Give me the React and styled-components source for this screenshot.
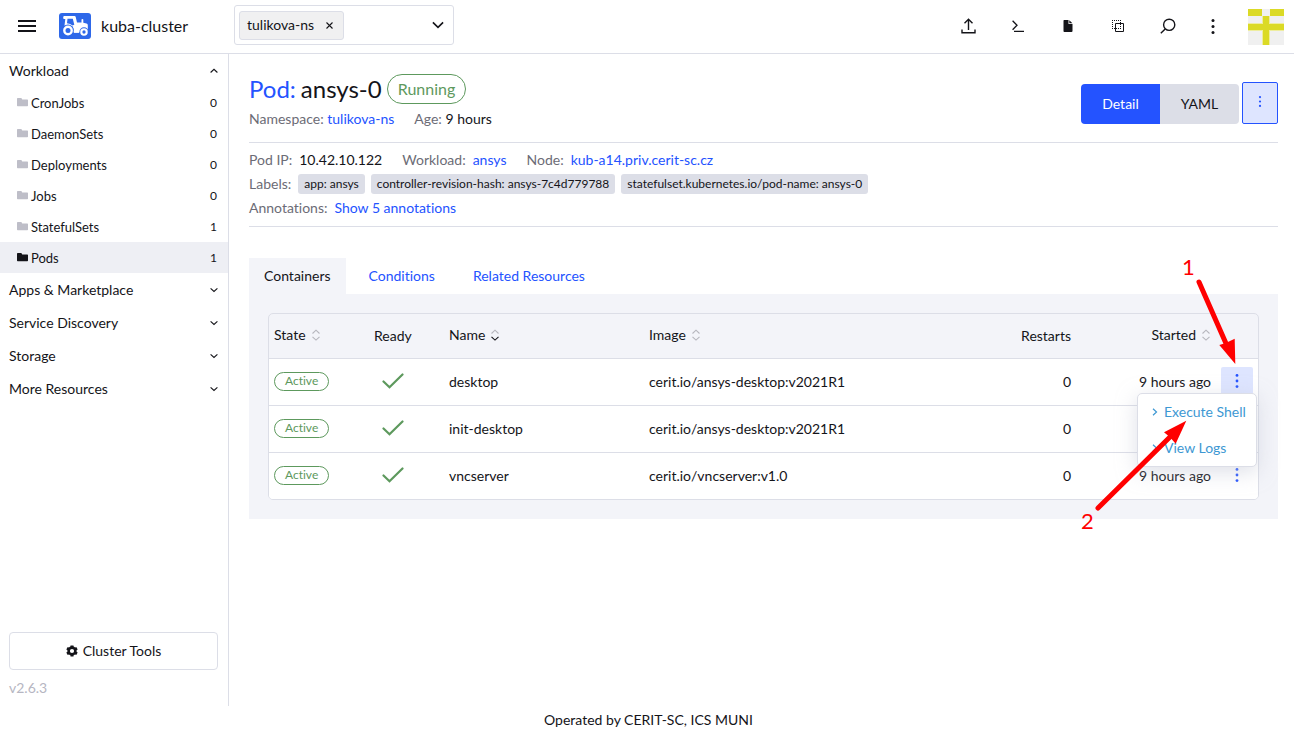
import React from "react";
import styled, { createGlobalStyle, css } from "styled-components";

const GlobalStyle = createGlobalStyle`
  * {
    box-sizing: border-box;
  }

  body {
    margin: 0;
    background: #fff;
    color: #141419;
    font-family: Lato, "Liberation Sans", sans-serif;
    font-size: 14px;
    font-variant-ligatures: none;
    line-height: 20px;
  }

  button {
    margin: 0;
    padding: 0;
    border: 0;
    background: none;
    color: inherit;
    font: inherit;
    font-variant-ligatures: none;
    cursor: pointer;
  }

  a {
    color: #2453ff;
    text-decoration: none;
  }

  svg {
    display: block;
    flex: none;
  }
`;

const Page = styled.div`
  display: flex;
  flex-direction: column;
  min-height: 100vh;
`;

const Header = styled.header`
  display: flex;
  align-items: center;
  height: 54px;
  padding: 0 10px 1px 18px;
  border-bottom: 1px solid #dcdee7;
`;

const MenuButton = styled.button`
  margin-right: 23px;
`;

const ClusterName = styled.div`
  width: 143px;
  padding-left: 10px;
  font-size: 16px;
`;

const NamespaceFilter = styled.div`
  display: flex;
  align-items: center;
  justify-content: space-between;
  width: 220px;
  height: 40px;
  margin-bottom: 2px;
  padding: 0 9px 0 4px;
  border: 1px solid #dcdee7;
  border-radius: 3px;
`;

const NamespaceTag = styled.span`
  display: flex;
  align-items: center;
  gap: 12px;
  height: 29px;
  padding: 0 10px 0 7px;
  border: 1px solid #dcdee7;
  border-radius: 3px;
  background: #f0f0f1;
`;

const HeaderTools = styled.div`
  display: flex;
  align-items: center;
  margin-left: auto;
`;

const ToolButton = styled.button`
  display: flex;
  align-items: center;
  justify-content: center;
  width: ${({ $narrow }) => ($narrow ? "40px" : "50px")};
  height: 40px;
`;

const AvatarButton = styled.button`
  margin: 2px 0 0 15px;
`;

const Body = styled.div`
  display: flex;
  flex: 1;
`;

const Sidebar = styled.nav`
  display: flex;
  flex-direction: column;
  width: 229px;
  flex: none;
  border-right: 1px solid #dcdee7;
`;

const GroupHeader = styled.button`
  display: flex;
  align-items: center;
  justify-content: space-between;
  width: 100%;
  height: 33px;
  padding: 0 10px 0 9px;
`;

const NavItem = styled.a`
  display: flex;
  align-items: center;
  gap: 3px;
  height: 31px;
  padding: 0 11px 0 17px;
  background: ${({ $active }) => ($active ? "#eeeff4" : "transparent")};
  color: #141419;

  svg {
    color: ${({ $active }) => ($active ? "#141419" : "#bebec8")};
  }
`;

const NavLabel = styled.span`
  flex: 1;
  font-size: 13px;
`;

const NavCount = styled.span`
  font-size: 12px;
`;

const SidebarFooter = styled.div`
  margin-top: auto;
  padding: 0 10px 8px 9px;
`;

const ClusterTools = styled.button`
  display: flex;
  align-items: center;
  justify-content: center;
  gap: 5px;
  width: 100%;
  height: 38px;
  border: 1px solid #dcdee7;
  border-radius: 4px;
`;

const Version = styled.div`
  margin-top: 8px;
  color: #b6b6c2;
`;

const Main = styled.main`
  flex: 1;
  min-width: 0;
  padding: 20px 16px 20px 20px;
`;

const Masthead = styled.div`
  display: flex;
  justify-content: space-between;
  padding-bottom: 13px;
  border-bottom: 1px solid #dcdee7;
`;

const Title = styled.h1`
  display: flex;
  align-items: center;
  gap: 5px;
  margin: 0 0 5px;
  font-size: 24px;
  font-weight: 400;
  line-height: 28px;
`;

const badge = css`
  display: inline-flex;
  align-items: center;
  border: 1px solid #5d995d;
  color: #5d995d;
`;

const PodBadge = styled.span`
  ${badge}
  height: 30px;
  padding: 0 10px;
  border-radius: 15px;
  font-size: 16px;
`;

const StateBadge = styled.span`
  ${badge}
  height: 19px;
  margin-bottom: 2px;
  padding: 0 10px;
  border-radius: 10px;
  font-size: 12px;
  vertical-align: middle;
`;

const InfoRow = styled.div`
  display: flex;
  gap: 20px;
`;

const Muted = styled.span`
  color: #6c6c76;
`;

const MastheadActions = styled.div`
  display: flex;
  align-items: flex-end;
  align-self: flex-start;
  gap: 3px;
  margin-top: 8px;
`;

const ViewSwitch = styled.div`
  display: flex;
  border-radius: 4px;
  overflow: hidden;
`;

const ViewButton = styled.button`
  width: 79px;
  height: 40px;
  background: ${({ $active }) => ($active ? "#2453ff" : "#dcdee7")};
  color: ${({ $active }) => ($active ? "#fff" : "#141419")};
`;

const MoreButton = styled.button`
  display: flex;
  justify-content: center;
  align-items: center;
  width: 36px;
  height: 42px;
  padding-bottom: 3px;
  border: 1px solid #2453ff;
  border-radius: 2px;
  background: #dee5ff;
  color: #2453ff;
`;

const Details = styled.section`
  padding: 5px 0 6px;
  border-bottom: 1px solid #dcdee7;
`;

const DetailRow = styled.div`
  display: flex;
  align-items: center;
  gap: 20px;
  height: 24px;
`;

const DetailItem = styled.div`
  display: flex;
  align-items: center;
  gap: 7px;
`;

const LabelList = styled.div`
  display: flex;
  gap: 6px;
`;

const Label = styled.span`
  height: 20px;
  padding: 0 6px;
  border-radius: 3px;
  background: #dcdee7;
  font-size: 12px;
`;

const TabList = styled.div`
  display: flex;
  gap: 8px;
  margin-top: 31px;
`;

const Tab = styled.button`
  height: 36px;
  padding: 0 15px;
  background: ${({ $active }) => ($active ? "#f3f4f9" : "transparent")};
  color: ${({ $active }) => ($active ? "#141419" : "#2453ff")};
`;

const TabPanel = styled.section`
  padding: 19px;
  background: #f3f4f9;
`;

const Table = styled.table`
  width: 100%;
  border: 1px solid #dcdee7;
  border-radius: 5px;
  border-spacing: 0;
  table-layout: fixed;

  th {
    height: 45px;
    padding: 0 5px;
    border-bottom: 1px solid #dcdee7;
    font-weight: 400;
    text-align: left;
  }

  td {
    height: 47px;
    padding: 0 5px;
    border-bottom: 1px solid #dcdee7;
    background: #fff;
  }

  tbody tr:last-child td {
    height: 46px;
    border-bottom: 0;
  }

  tbody tr:last-child td:first-child {
    border-bottom-left-radius: 4px;
  }

  tbody tr:last-child td:last-child {
    border-bottom-right-radius: 4px;
  }

  .right {
    text-align: right;
  }
`;

const Col = styled.col`
  width: ${({ $width }) => $width || "auto"};
`;

const SortButton = styled.button`
  display: inline-flex;
  align-items: center;
  gap: 5px;
  margin-bottom: 2px;
  vertical-align: middle;
`;

const CheckMark = styled.svg`
  margin: 0 0 2px 8px;
`;

const RowActions = styled.div`
  position: relative;
  width: 32px;
`;

const RowButton = styled.button`
  display: flex;
  align-items: center;
  justify-content: center;
  width: 32px;
  height: 30px;
  padding-bottom: 2px;
  border-radius: 2px;
  background: ${({ $open }) => ($open ? "#dee5ff" : "transparent")};
  color: #2453ff;
`;

const Menu = styled.div`
  position: absolute;
  z-index: 1;
  top: 26px;
  right: -4px;
  width: 120px;
  border: 1px solid #dcdee7;
  border-radius: 5px;
  background: #fff;
  box-shadow: 0 5px 20px rgba(190, 193, 210, 0.5);
`;

const MenuItem = styled.button`
  display: flex;
  align-items: center;
  gap: 6px;
  width: 100%;
  height: 36px;
  padding-left: 14px;
  color: #3d98d3;
  white-space: nowrap;
`;

// drawn over the first row's menu, so it moves along with it
const Steps = styled.svg`
  position: absolute;
  z-index: 2;
  top: -130px;
  left: -144px;
  pointer-events: none;
  font-family: Lato, "Liberation Sans", sans-serif;
  font-size: 22px;
`;

const Footer = styled.footer`
  height: 26px;
  padding: 4px 0 2px 3px;
  text-align: center;
`;

const Dots = ({ size = 14, r = 1.4 }) => (
  <svg width="4" height={size} viewBox={`0 0 4 ${size}`} fill="currentColor">
    <circle cx="2" cy={r} r={r} />
    <circle cx="2" cy={size / 2} r={r} />
    <circle cx="2" cy={size - r} r={r} />
  </svg>
);

const Chevron = ({ up, width = 8, stroke = 1.1 }) => (
  <svg
    width={width}
    height={width}
    viewBox="0 0 8 8"
    fill="none"
    stroke="currentColor"
    strokeWidth={stroke}
  >
    <path d={up ? "M.6 5.5 4 2.3l3.4 3.2" : "M.6 2.3 4 5.5l3.4-3.2"} />
  </svg>
);

const Folder = () => (
  <svg width="11" height="9" viewBox="0 0 11 9" fill="currentColor">
    <path d="M0 .7Q0 0 .7 0h3.3q.5 0 .8.5l.4.9h5.1q.7 0 .7.7v5.400q0 .7-.7.7H.7Q0 8.200 0 7.500z" />
  </svg>
);

const Gear = () => (
  <svg width="12" height="12" viewBox="0 0 12 12" fill="none" stroke="currentColor">
    <circle cx="6" cy="6" r="3.400" strokeWidth="2.600" />
    <path
      strokeWidth="3"
      d="M6 .5v2M6 9.500v2M1 3.200l2 1.100M9 7.700l2 1.100M1 8.800l2-1.100M9 4.300l2-1.100"
    />
  </svg>
);

const Logo = () => (
  <svg width="32" height="26" viewBox="0 0 32 26">
    <rect width="32" height="26" rx="3" fill="#2e68e9" />
    <path
      fill="#fff"
      d="M5 3h10.500q1 0 1.200 1l1.300 5.500h4.500V6.800q0-.9.900-.9t.9.900v2.900l3.200.8q1.300.4 1.300 1.700V19H14.500L5.500 12.500 6.300 6H5q-.8 0-.8-1.500T5 3z"
    />
    <path fill="#2e68e9" d="M8.500 5.800h5.300l1.500 6-1.800.8q-2-1.900-5.500-2.300z" />
    <circle cx="9" cy="17.500" r="6" fill="#2e68e9" />
    <circle cx="9" cy="17.500" r="3.700" fill="none" stroke="#fff" strokeWidth="2.400" />
    <circle cx="25" cy="19" r="4.700" fill="#2e68e9" />
    <circle cx="25" cy="19" r="2.700" fill="none" stroke="#fff" strokeWidth="2.100" />
    <path stroke="#fff" strokeWidth="2.800" d="M14.800 18.500h5.400" />
  </svg>
);

const Avatar = () => (
  <svg width="36" height="36" viewBox="0 0 36 36">
    <path fill="#f0f0f0" d="M0 0h36v36H0z" />
    <path fill="#eeeda0" d="M0 14h36v8H0zM14 7h8v29h-8z" />
    <path fill="#dbda26" d="M0 0h14v7H0zM22 0h14v7H22zM0 15h36v6H0zM15 7h6v29h-6z" />
  </svg>
);

const SortIcon = ({ active }) => (
  <svg width="10" height="12" viewBox="0 0 10 12" fill="none" strokeWidth="1.100">
    <path stroke="#b6b6bd" d="M1.500 4.500 5 1.200l3.500 3.300" />
    <path stroke={active ? "#141419" : "#b6b6bd"} d="M1.500 7.800 5 11.100l3.500-3.300" />
  </svg>
);

const UploadIcon = () => (
  <svg width="15" height="16" viewBox="0 0 15 16" fill="none" stroke="currentColor" strokeWidth="1.400">
    <path d="M7.500 12V1.200M3.500 5.200l4-4 4 4M1 11.500v3.300h13v-3.300" />
  </svg>
);

const ShellIcon = () => (
  <svg width="12" height="12" viewBox="0 0 12 12" fill="none" stroke="currentColor" strokeWidth="1.300">
    <path d="M.6.800 5 5.300.6 9.800M2 11.300h10" />
  </svg>
);

const FileIcon = () => (
  <svg width="10" height="12" viewBox="0 0 10 12" fill="currentColor">
    <path d="M1 0h4.500v4H9.500v7q0 1-1 1H1.300q-.8 0-.8-1V1Q.5 0 1 0zM6.300.2 9.400 3.300H6.300z" />
  </svg>
);

const CopyIcon = () => (
  <svg width="12" height="12" viewBox="0 0 12 12" fill="none" stroke="currentColor">
    <path strokeDasharray="1 1" d="M0 .5h9M.5 0v9M8.500 0v9M0 8.500h9" />
    <path d="M3.500 3.500h8v8h-8z" />
  </svg>
);

const SearchIcon = () => (
  <svg width="16" height="16" viewBox="0 0 16 16" fill="none" stroke="currentColor" strokeWidth="1.400">
    <circle cx="9.200" cy="6.800" r="5.600" />
    <path d="M5.200 10.900.8 15.300" />
  </svg>
);

const workloads = [
  { name: "CronJobs", count: 0 },
  { name: "DaemonSets", count: 0 },
  { name: "Deployments", count: 0 },
  { name: "Jobs", count: 0 },
  { name: "StatefulSets", count: 1 },
  { name: "Pods", count: 1, active: true },
];

const groups = ["Apps & Marketplace", "Service Discovery", "Storage", "More Resources"];

const labels = [
  "app: ansys",
  "controller-revision-hash: ansys-7c4d779788",
  "statefulset.kubernetes.io/pod-name: ansys-0",
];

const containers = [
  { name: "desktop", image: "cerit.io/ansys-desktop:v2021R1", open: true },
  { name: "init-desktop", image: "cerit.io/ansys-desktop:v2021R1" },
  { name: "vncserver", image: "cerit.io/vncserver:v1.0" },
];

const TopBar = () => (
  <Header>
    <MenuButton aria-label="Menu">
      <svg width="18" height="12" viewBox="0 0 18 12" fill="currentColor">
        <path d="M0 0h18v2H0zM0 5h18v2H0zM0 10h18v2H0z" />
      </svg>
    </MenuButton>
    <Logo />
    <ClusterName>kuba-cluster</ClusterName>
    <NamespaceFilter>
      <NamespaceTag>
        tulikova-ns
        <button aria-label="Remove tulikova-ns">
          <svg width="7" height="7" viewBox="0 0 7 7" stroke="currentColor" strokeWidth="1.100">
            <path d="m.5.500 6 6M6.500.500l-6 6" />
          </svg>
        </button>
      </NamespaceTag>
      <button aria-label="Select namespaces">
        <Chevron width={12} />
      </button>
    </NamespaceFilter>
    <HeaderTools>
      <ToolButton aria-label="Import YAML"><UploadIcon /></ToolButton>
      <ToolButton aria-label="Kubectl Shell"><ShellIcon /></ToolButton>
      <ToolButton aria-label="Download KubeConfig"><FileIcon /></ToolButton>
      <ToolButton aria-label="Copy KubeConfig"><CopyIcon /></ToolButton>
      <ToolButton aria-label="Resource Search"><SearchIcon /></ToolButton>
      <ToolButton $narrow aria-label="More"><Dots size={15} r={1.5} /></ToolButton>
      <AvatarButton aria-label="User"><Avatar /></AvatarButton>
    </HeaderTools>
  </Header>
);

const SideNav = () => (
  <Sidebar>
    <GroupHeader>
      Workload
      <Chevron up />
    </GroupHeader>
    {workloads.map((item) => (
      <NavItem key={item.name} href="#" $active={item.active}>
        <Folder />
        <NavLabel>{item.name}</NavLabel>
        <NavCount>{item.count}</NavCount>
      </NavItem>
    ))}
    {groups.map((group) => (
      <GroupHeader key={group}>
        {group}
        <Chevron />
      </GroupHeader>
    ))}
    <SidebarFooter>
      <ClusterTools>
        <Gear />
        Cluster Tools
      </ClusterTools>
      <Version>v2.6.3</Version>
    </SidebarFooter>
  </Sidebar>
);

const ContainerMenu = () => (
  <>
    <Menu>
      {["Execute Shell", "View Logs"].map((action) => (
        <MenuItem key={action}>
          <svg width="6" height="8" viewBox="0 0 6 8" fill="none" stroke="currentColor" strokeWidth="1.200">
            <path d="M1 .8 4.500 4 1 7.200" />
          </svg>
          {action}
        </MenuItem>
      ))}
    </Menu>
    <Steps width="180" height="310" viewBox="0 -20 180 310" fill="#f00">
      <text x="105" y="18">1</text>
      <text x="4" y="272">2</text>
      <g stroke="#f00" strokeWidth="5" strokeLinecap="round">
        <path d="M122 25 151 91" />
        <path d="M21 251 96 177" />
      </g>
      <path d="M158.300 107 142.300 88l6.500-2 8.900-4.300z" />
      <path d="M109.300 163.700 87 175.300l6 5 5.700 6.400z" />
    </Steps>
  </>
);

const ContainerTable = () => (
  <Table>
    <colgroup>
      <Col $width="100px" />
      <Col $width="75px" />
      <Col $width="200px" />
      <Col />
      <Col $width="100px" />
      <Col $width="140px" />
      <Col $width="42px" />
    </colgroup>
    <thead>
      <tr>
        <th><SortButton>State <SortIcon /></SortButton></th>
        <th>Ready</th>
        <th><SortButton>Name <SortIcon active /></SortButton></th>
        <th><SortButton>Image <SortIcon /></SortButton></th>
        <th className="right">Restarts</th>
        <th className="right"><SortButton>Started <SortIcon /></SortButton></th>
        <th aria-label="Actions" />
      </tr>
    </thead>
    <tbody>
      {containers.map((container) => (
        <tr key={container.name}>
          <td><StateBadge>Active</StateBadge></td>
          <td>
            <CheckMark width="22" height="16" viewBox="0 0 22 16" fill="none" stroke="#5d995d" strokeWidth="2.200">
              <path strokeLinecap="round" d="m1.500 8.500 6 5.800L20.500 1.500" />
            </CheckMark>
          </td>
          <td>{container.name}</td>
          <td>{container.image}</td>
          <td className="right">0</td>
          <td className="right">9 hours ago</td>
          <td>
            <RowActions>
              <RowButton $open={container.open} aria-label={`Actions for ${container.name}`}>
                <Dots />
              </RowButton>
              {container.open && <ContainerMenu />}
            </RowActions>
          </td>
        </tr>
      ))}
    </tbody>
  </Table>
);

export default function App() {
  return (
    <Page>
      <GlobalStyle />
      <TopBar />
      <Body>
        <SideNav />
        <Main>
          <Masthead>
            <div>
              <Title>
                <a href="#">Pod:</a>
                <span>ansys-0</span>
                <PodBadge>Running</PodBadge>
              </Title>
              <InfoRow>
                <span><Muted>Namespace:</Muted> <a href="#">tulikova-ns</a></span>
                <span><Muted>Age:</Muted> 9 hours</span>
              </InfoRow>
            </div>
            <MastheadActions>
              <ViewSwitch>
                <ViewButton $active>Detail</ViewButton>
                <ViewButton>YAML</ViewButton>
              </ViewSwitch>
              <MoreButton aria-label="Pod actions"><Dots size={11} r={1.1} /></MoreButton>
            </MastheadActions>
          </Masthead>
          <Details>
            <DetailRow>
              <DetailItem><Muted>Pod IP:</Muted> <span>10.42.10.122</span></DetailItem>
              <DetailItem><Muted>Workload:</Muted> <a href="#">ansys</a></DetailItem>
              <DetailItem><Muted>Node:</Muted> <a href="#">kub-a14.priv.cerit-sc.cz</a></DetailItem>
            </DetailRow>
            <DetailRow>
              <DetailItem>
                <Muted>Labels:</Muted>
                <LabelList>
                  {labels.map((label) => (
                    <Label key={label}>{label}</Label>
                  ))}
                </LabelList>
              </DetailItem>
            </DetailRow>
            <DetailRow>
              <DetailItem><Muted>Annotations:</Muted> <a href="#">Show 5 annotations</a></DetailItem>
            </DetailRow>
          </Details>
          <TabList role="tablist">
            <Tab role="tab" aria-selected="true" $active>Containers</Tab>
            <Tab role="tab" aria-selected="false">Conditions</Tab>
            <Tab role="tab" aria-selected="false">Related Resources</Tab>
          </TabList>
          <TabPanel role="tabpanel">
            <ContainerTable />
          </TabPanel>
        </Main>
      </Body>
      <Footer>Operated by CERIT-SC, ICS MUNI</Footer>
    </Page>
  );
}
